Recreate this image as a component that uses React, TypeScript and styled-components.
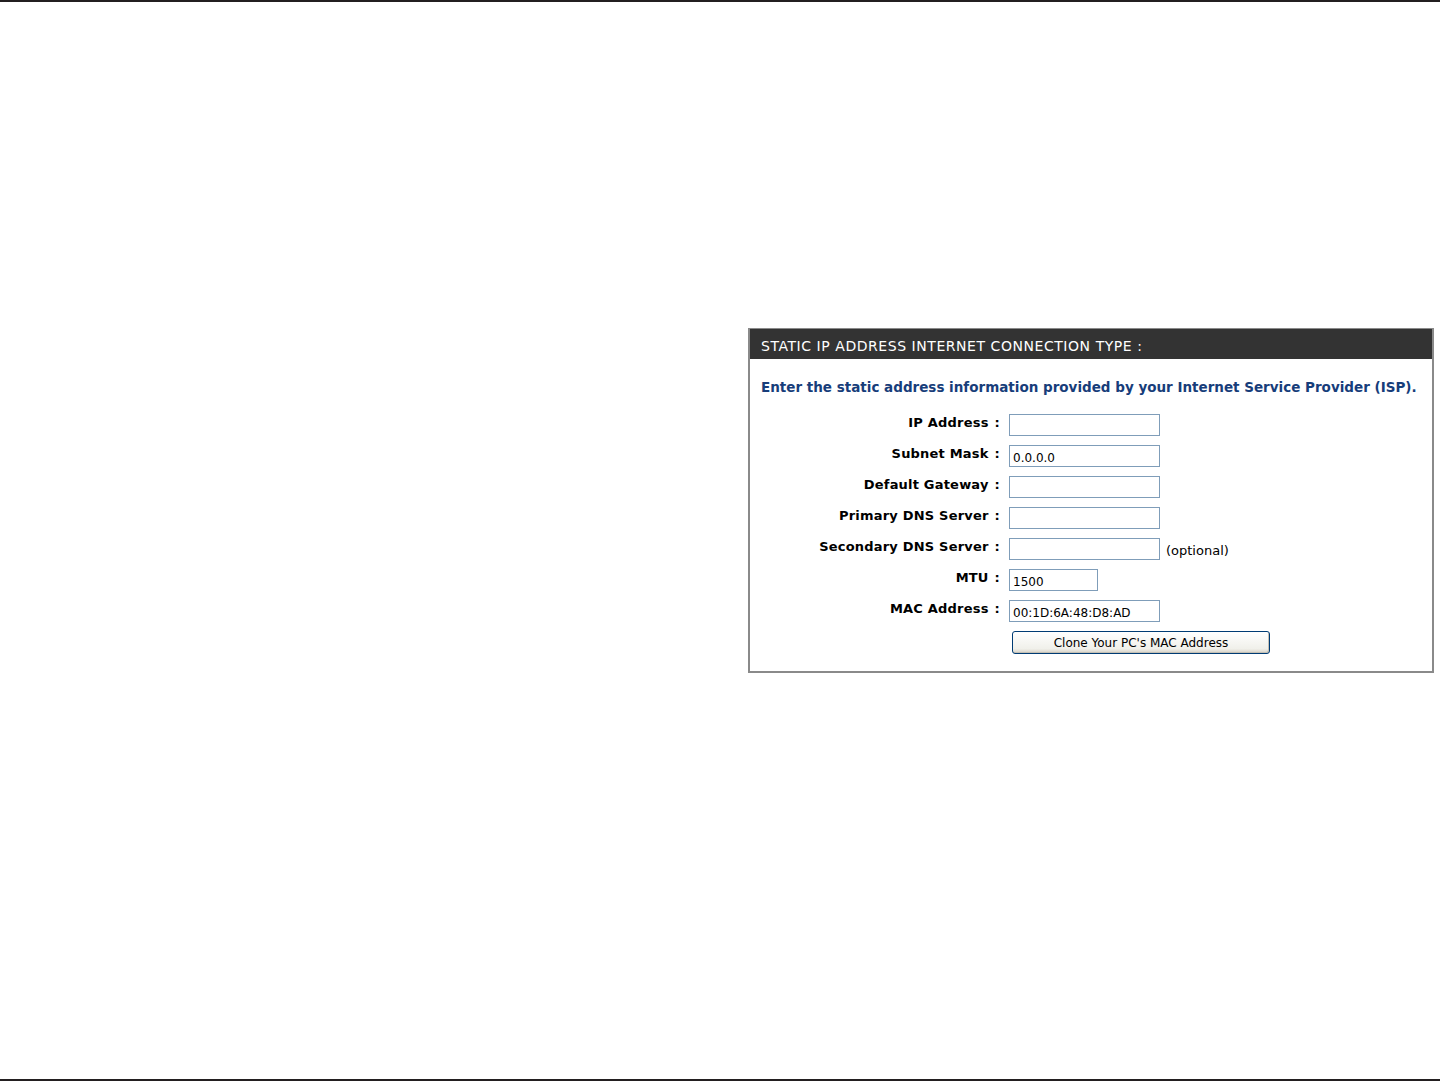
import styled, { createGlobalStyle } from 'styled-components';

const GlobalStyle = createGlobalStyle`
  html, body {
    margin: 0;
    padding: 0;
    background: #ffffff;
  }
  body {
    font-family: "DejaVu Sans", Verdana, sans-serif;
  }
`;

const FIELDS = [
  { id: 1, label: 'IP Address', value: '', width: 151 },
  { id: 2, label: 'Subnet Mask', value: '0.0.0.0', width: 151 },
  { id: 3, label: 'Default Gateway', value: '', width: 151 },
  { id: 4, label: 'Primary DNS Server', value: '', width: 151 },
  { id: 5, label: 'Secondary DNS Server', value: '', width: 151, note: '(optional)' },
  { id: 6, label: 'MTU', value: '1500', width: 89 },
  { id: 7, label: 'MAC Address', value: '00:1D:6A:48:D8:AD', width: 151 },
];

export default function App() {
  return (
    <>
      <GlobalStyle />
      <Page>
        <Content>
          <Panel>
            <PanelHeader>STATIC IP ADDRESS INTERNET CONNECTION TYPE :</PanelHeader>
            <PanelBody>
              <Intro>
                Enter the static address information provided by your Internet Service Provider (ISP).
              </Intro>
              <Form>
                {FIELDS.map(field => (
                  <Row key={field.id}>
                    <Label>
                      {field.label}
                      <Colon>:</Colon>
                    </Label>
                    <Field>
                      <TextInput type="text" defaultValue={field.value} $width={field.width} />
                      {field.note && <Note>{field.note}</Note>}
                    </Field>
                  </Row>
                ))}
                <Row>
                  <span />
                  <Field>
                    <CloneButton type="button">Clone Your PC's MAC Address</CloneButton>
                  </Field>
                </Row>
              </Form>
            </PanelBody>
          </Panel>
        </Content>
      </Page>
    </>
  );
}

const Page = styled.div`
  height: 1081px;
  box-sizing: border-box;
  border-top: 2px solid #231f20;
  border-bottom: 2px solid #231f20;
  display: flex;
  flex-direction: column;
`;

const Content = styled.main`
  padding: 326px 0 0 748px;
`;

const Panel = styled.section`
  width: 686px;
  box-sizing: border-box;
  border: 2px solid #8a8a8a;
  border-top-width: 1px;
  background: #ffffff;
`;

const PanelHeader = styled.h2`
  margin: 0;
  height: 30px;
  box-sizing: border-box;
  display: flex;
  align-items: center;
  padding: 3px 0 0 11px;
  background: #333333;
  color: #ffffff;
  font-size: 14px;
  font-weight: normal;
  letter-spacing: 0.55px;
`;

const PanelBody = styled.div`
  padding: 18px 0 17px 11px;
`;

const Intro = styled.p`
  margin: 0 0 17px;
  color: #173d7a;
  font-size: 13.5px;
  font-weight: bold;
  line-height: 20px;
`;

const Form = styled.div`
  display: flex;
  flex-direction: column;
  gap: 9px;
`;

const Row = styled.div`
  display: grid;
  grid-template-columns: 239px 1fr;
  column-gap: 9px;
  align-items: center;
  min-height: 22px;
`;

const Label = styled.label`
  text-align: right;
  font-size: 13px;
  font-weight: bold;
  letter-spacing: 0.2px;
  color: #000000;
  padding-bottom: 5px;
  white-space: nowrap;
`;

const Colon = styled.span`
  margin-left: 6px;
`;

const Field = styled.div`
  display: flex;
  align-items: center;
  gap: 6px;
`;

const TextInput = styled.input<{ $width: number }>`
  width: ${p => p.$width}px;
  height: 22px;
  box-sizing: border-box;
  border: 1px solid #7f9db9;
  padding: 3px 3px 0;
  font-family: "DejaVu Sans", Verdana, sans-serif;
  font-size: 12px;
  color: #000000;
  background: #ffffff;
  outline: none;
`;

const Note = styled.span`
  font-size: 13px;
  color: #000000;
  padding-top: 3px;
`;

const CloneButton = styled.button`
  margin-left: 3px;
  width: 258px;
  height: 23px;
  border: 1px solid #003c74;
  border-radius: 3px;
  background: linear-gradient(#ffffff, #f0f0ea 80%, #d6d0c5);
  box-shadow: inset -1px -1px 0 #c4c0b5;
  font-family: "DejaVu Sans", Verdana, sans-serif;
  font-size: 12px;
  color: #000000;
  padding: 0;
`;
